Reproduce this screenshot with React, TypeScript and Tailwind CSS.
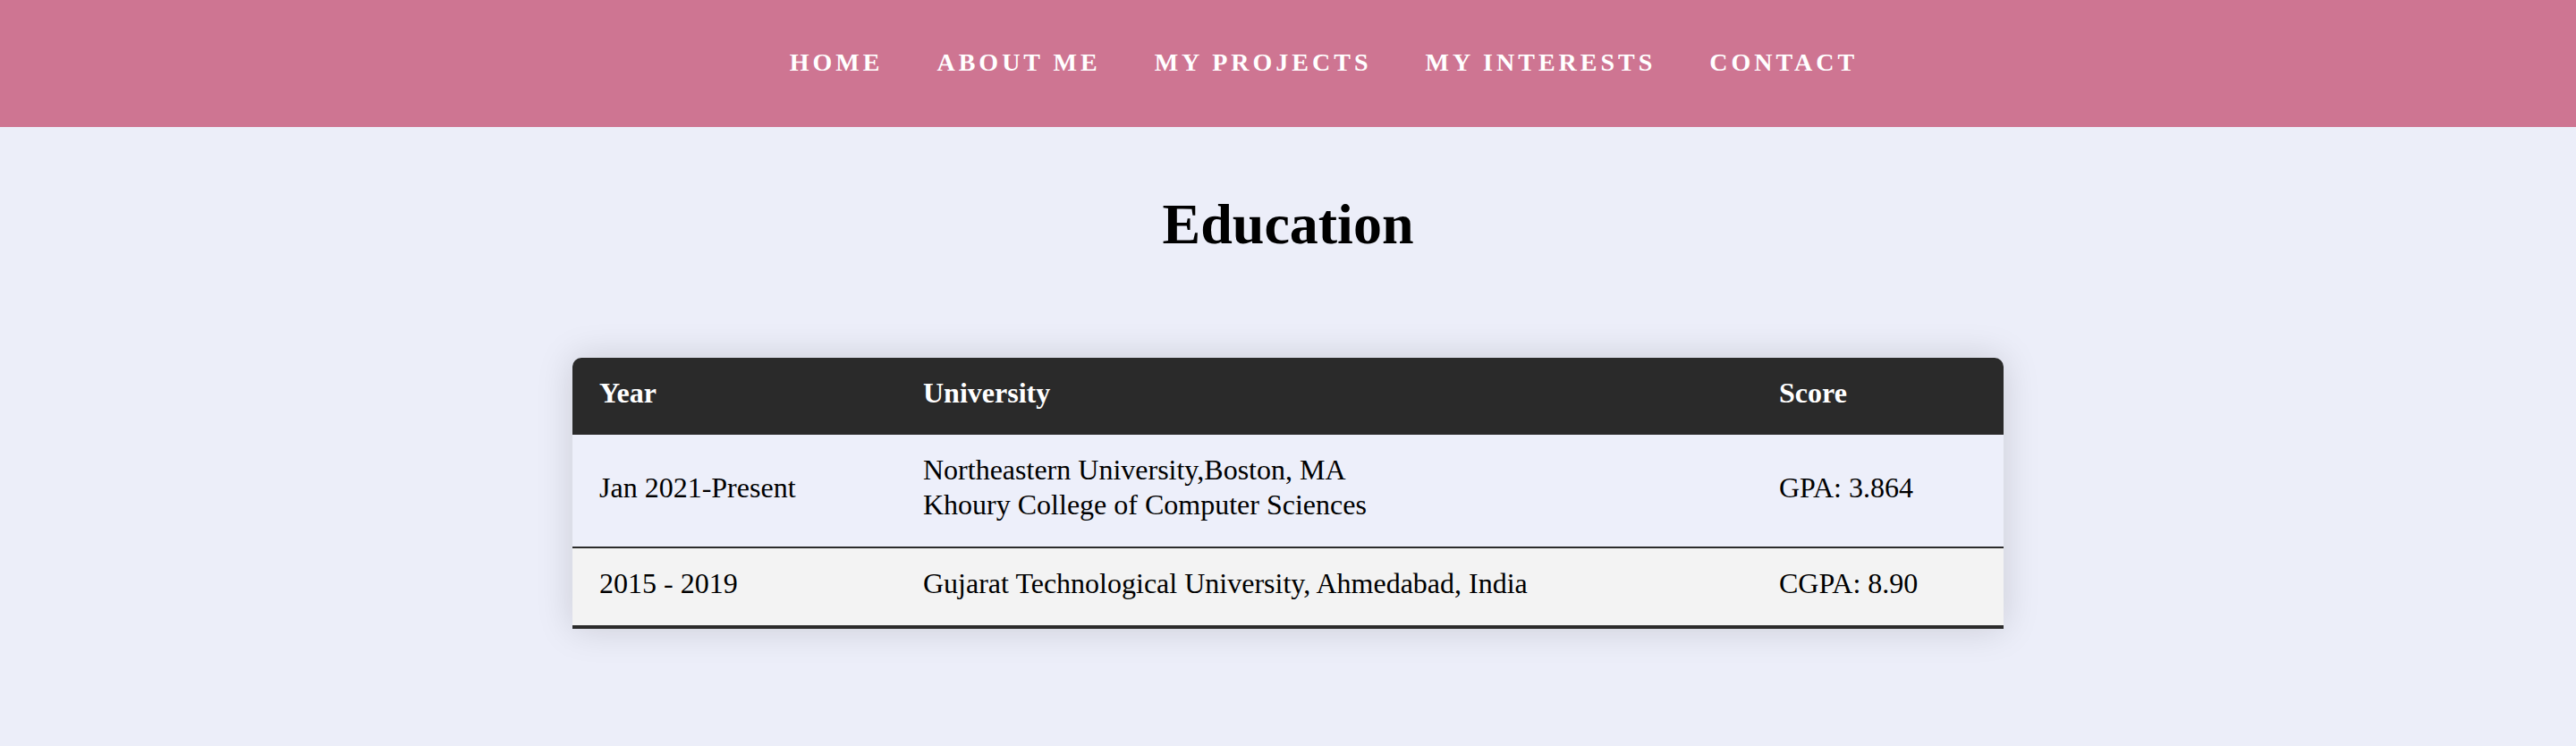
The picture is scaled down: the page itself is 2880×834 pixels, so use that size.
const links = ["Home", "About Me", "My Projects", "My Interests", "Contact"];

const rows = [
  {
    year: "Jan 2021-Present",
    uni: ["Northeastern University,Boston, MA", "Khoury College of Computer Sciences"],
    score: "GPA: 3.864",
    cell: "bg-[#edeffa] border-b-2 border-[#2b2b2b]",
  },
  {
    year: "2015 - 2019",
    uni: ["Gujarat Technological University, Ahmedabad, India"],
    score: "CGPA: 8.90",
    cell: "bg-[#f3f3f3] border-b-4 border-[#2b2b2b]",
  },
];

const App = () => {
  return (
    <div className=" min-h-screen w-full bg-[#eceef9] font-['Liberation_Serif',serif] text-black">
      <nav className=" w-full h-[142px] bg-[#ce7592] flex items-center justify-center pl-[80px] pb-[2px]">
        <ul className=" flex items-center gap-[60px]">
          {links.map((link) => (
            <li
              key={link}
              className=" text-[28px] leading-[30px] font-bold uppercase tracking-[4px] text-white"
            >
              {link}
            </li>
          ))}
        </ul>
      </nav>

      <section className=" w-full flex flex-col items-center">
        <h1 className=" mt-[72px] text-[64px] leading-[74px] font-bold">Education</h1>

        <div className=" mt-[112px] w-[1600px] rounded-t-[10px] overflow-hidden shadow-[0_0_40px_rgba(0,0,0,0.15)]">
          <table className=" w-full table-fixed border-separate border-spacing-0 text-left text-[32px] leading-[39px]">
            <colgroup>
              <col className=" w-[362px]" />
              <col className=" w-[957px]" />
              <col className=" w-[281px]" />
            </colgroup>
            <thead>
              <tr className=" bg-[#2a2a2a] text-white">
                <th className=" px-[30px] pt-[20px] pb-[27px] font-bold">Year</th>
                <th className=" px-[30px] pt-[20px] pb-[27px] font-bold">University</th>
                <th className=" px-[30px] pt-[20px] pb-[27px] font-bold">Score</th>
              </tr>
            </thead>
            <tbody>
              {rows.map((row) => (
                <tr key={row.year}>
                  <td className={`px-[30px] pt-[20px] pb-[27px] ${row.cell}`}>{row.year}</td>
                  <td className={`px-[30px] pt-[20px] pb-[27px] ${row.cell}`}>
                    {row.uni.map((line) => (
                      <div key={line}>{line}</div>
                    ))}
                  </td>
                  <td className={`px-[30px] pt-[20px] pb-[27px] ${row.cell}`}>{row.score}</td>
                </tr>
              ))}
            </tbody>
          </table>
        </div>
      </section>
    </div>
  );
};

export default App;
